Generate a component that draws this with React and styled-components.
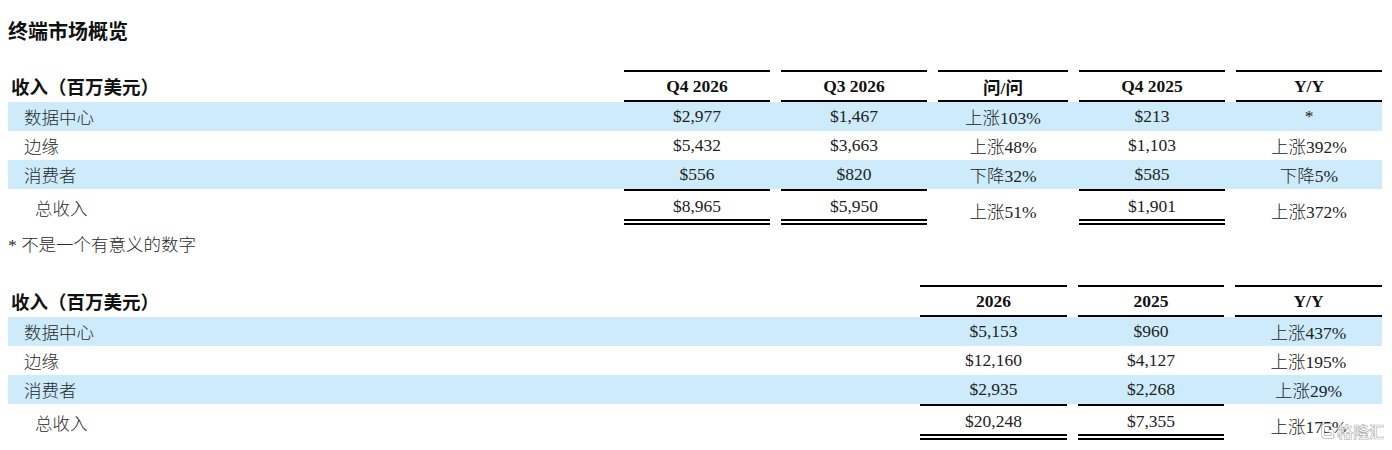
import React from "react";
import styled, { createGlobalStyle } from "styled-components";

const GlobalStyle = createGlobalStyle`
  html, body { background: #ffffff; }
  body {
    margin: 8px;
    font-family: "Liberation Serif", "Noto Sans CJK SC", serif;
    color: #1e1e1e;
  }
`;

const Page = styled.div`
  position: relative;
  max-width: 1374px;
`;

const Title = styled.h1`
  margin: 0;
  padding-top: 10px;
  font-size: 20px;
  line-height: 28px;
  font-weight: 700;
  color: #111;
`;

const Table = styled.div`
  margin-top: ${(p) => p.$mt}px;
  font-size: 17.5px;
`;

const Row = styled.div`
  display: grid;
  grid-template-columns: ${(p) => p.$cols};
  column-gap: 11px;
  height: ${(p) => p.$h}px;
  background: ${(p) => (p.$shaded ? "#cdebfa" : "transparent")};
`;

const HeadLabel = styled.div`
  display: flex;
  align-items: center;
  padding-left: 3px;
  font-size: 18.5px;
  font-weight: 700;
  color: #111;
`;

const HeadCell = styled.div`
  box-sizing: border-box;
  display: flex;
  align-items: center;
  justify-content: center;
  border-top: 2px solid #000;
  border-bottom: 2px solid #000;
  font-weight: 700;
  color: #111;
`;

const Label = styled.div`
  display: flex;
  align-items: center;
  padding-left: ${(p) => p.$indent}px;
  font-weight: 300;
  color: #2a2a2a;
`;

const Cell = styled.div`
  box-sizing: border-box;
  display: flex;
  align-items: center;
  justify-content: center;
  padding-top: ${(p) => p.$pt || 0}px;
  border-top: ${(p) => (p.$sum ? "2px solid #000" : "none")};
  border-bottom: ${(p) => (p.$sum ? "6px double #000" : "none")};
  white-space: nowrap;
  font-weight: 300;
  color: #222;
`;

const Note = styled.p`
  margin: 6px 0 0;
  font-size: 17.5px;
  line-height: 28px;
  font-weight: 300;
  color: #2a2a2a;
`;

const Watermark = styled.div`
  position: absolute;
  right: -3px;
  bottom: 0;
  display: flex;
  align-items: center;
  gap: 2px;
  font-family: "Noto Sans CJK SC", sans-serif;
  font-size: 16px;
  line-height: 18px;
  font-weight: 700;
  color: rgba(255, 255, 255, 0.8);
  -webkit-text-stroke: 0.7px rgba(130, 130, 130, 0.6);
  pointer-events: none;
`;

const quarterly = {
  cols: "1fr 146px 146px 130px 146px 146px",
  head: ["Q4 2026", "Q3 2026", "问/问", "Q4 2025", "Y/Y"],
  sumCols: [true, true, false, true, false],
  rows: [
    { label: "数据中心", v: ["$2,977", "$1,467", "上涨103%", "$213", "*"] },
    { label: "边缘", v: ["$5,432", "$3,663", "上涨48%", "$1,103", "上涨392%"] },
    { label: "消费者", v: ["$556", "$820", "下降32%", "$585", "下降5%"] },
  ],
  total: ["$8,965", "$5,950", "上涨51%", "$1,901", "上涨372%"],
};

const annual = {
  cols: "1fr 147px 146px 147px",
  head: ["2026", "2025", "Y/Y"],
  sumCols: [true, true, false],
  rows: [
    { label: "数据中心", v: ["$5,153", "$960", "上涨437%"] },
    { label: "边缘", v: ["$12,160", "$4,127", "上涨195%"] },
    { label: "消费者", v: ["$2,935", "$2,268", "上涨29%"] },
  ],
  total: ["$20,248", "$7,355", "上涨175%"],
};

function RevenueTable({ data, mt }) {
  return (
    <Table $mt={mt}>
      <Row $cols={data.cols} $h={32}>
        <HeadLabel>收入（百万美元）</HeadLabel>
        {data.head.map((h) => (
          <HeadCell key={h}>{h}</HeadCell>
        ))}
      </Row>
      {data.rows.map((r, i) => (
        <Row key={r.label} $cols={data.cols} $h={29} $shaded={i % 2 === 0}>
          <Label $indent={16}>{r.label}</Label>
          {r.v.map((v, j) => (
            <Cell key={j}>{v}</Cell>
          ))}
        </Row>
      ))}
      <Row $cols={data.cols} $h={36}>
        <Label $indent={27}>总收入</Label>
        {data.total.map((v, j) => (
          <Cell key={j} $sum={data.sumCols[j]} $pt={data.sumCols[j] ? 2 : 6}>
            {v}
          </Cell>
        ))}
      </Row>
    </Table>
  );
}

function Logo() {
  const d = "M11 3 H4.5 Q2 3 2 5.5 V12.5 Q2 15 4.5 15 H11.5 V9 H7.5";
  return (
    <svg width="14" height="18" viewBox="0 0 14 18" fill="none">
      <path d={d} stroke="rgba(130,130,130,0.6)" strokeWidth="3.6" strokeLinejoin="round" />
      <path d={d} stroke="rgba(255,255,255,0.95)" strokeWidth="2" strokeLinejoin="round" />
    </svg>
  );
}

export default function App() {
  return (
    <>
      <GlobalStyle />
      <Page>
        <Title>终端市场概览</Title>
        <RevenueTable data={quarterly} mt={24} />
        <Note>* 不是一个有意义的数字</Note>
        <RevenueTable data={annual} mt={26} />
        <Watermark>
          <Logo />
          格隆汇
        </Watermark>
      </Page>
    </>
  );
}
